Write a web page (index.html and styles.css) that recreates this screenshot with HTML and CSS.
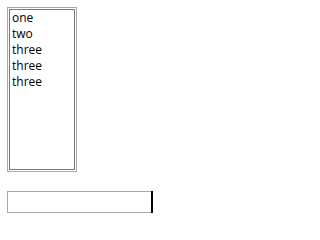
FILE: index.html
```html
<!DOCTYPE html>
<html>
<head>
<meta charset="utf-8">
<link rel="stylesheet" href="styles.css">
</head>
<body>
<div class="page">
  <div class="listbox">
    <div class="listbox-inner">
      <div class="item">one</div>
      <div class="item">two</div>
      <div class="item">three</div>
      <div class="item">three</div>
      <div class="item">three</div>
    </div>
  </div>
  <div class="field">
    <div class="field-box"></div>
    <div class="field-bar"></div>
  </div>
</div>
</body>
</html>
```
FILE: styles.css
```css
html, body {
  margin: 0;
  padding: 0;
  background: #ffffff;
}
.page {
  padding: 7px;
  display: flex;
  flex-direction: column;
  align-items: flex-start;
  gap: 19px;
  font-family: "Open Sans", "Noto Sans", sans-serif;
  font-size: 12px;
  color: #000;
}
.listbox {
  width: 70px;
  height: 165px;
  box-sizing: border-box;
  border: 1px solid #a9a9a9;
  padding: 1px;
}
.listbox-inner {
  height: 100%;
  box-sizing: border-box;
  border: 1px solid #7a7a7a;
  padding: 0 2px;
}
.item {
  line-height: 16px;
  height: 16px;
}
.field {
  display: flex;
  align-items: stretch;
}
.field-box {
  width: 144px;
  height: 22px;
  box-sizing: border-box;
  border: 1px solid #a9a9a9;
  border-right: none;
}
.field-bar {
  width: 2px;
  background: #000;
}
```
